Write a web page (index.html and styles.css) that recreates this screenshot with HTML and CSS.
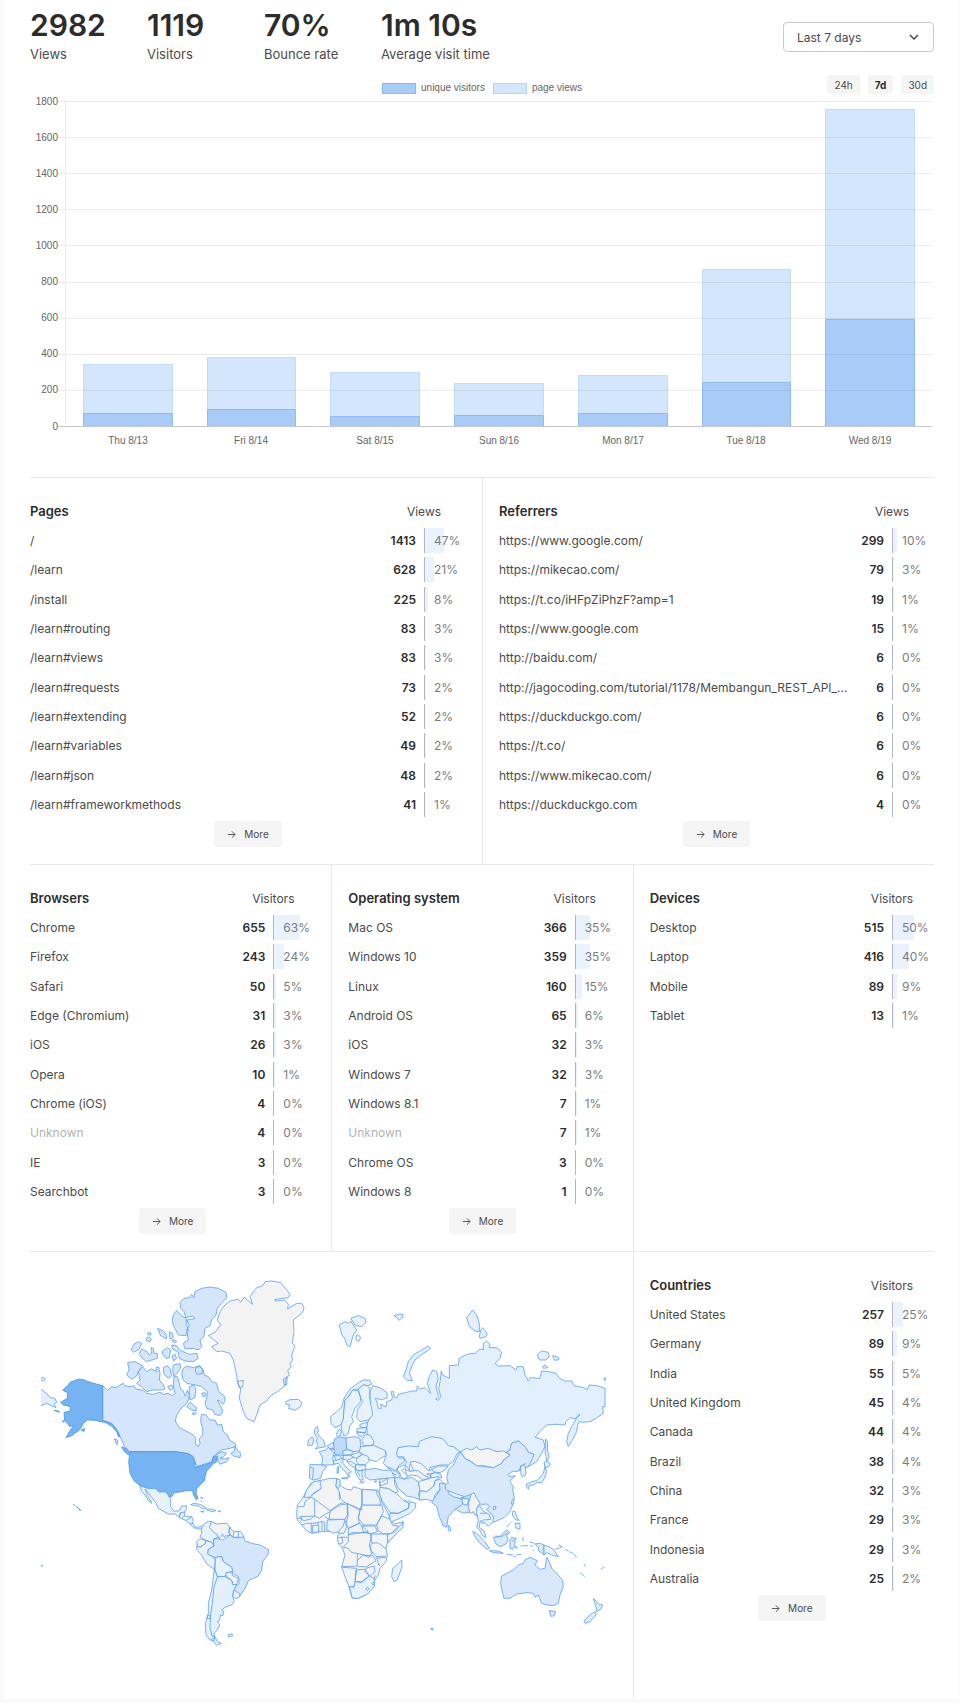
FILE: index.html
```html
<!DOCTYPE html>
<html lang="en">
<head>
    <meta charset="utf-8">
    <meta name="viewport" content="width=device-width, initial-scale=1">
    <title>Website stats</title>
    <link rel="stylesheet" href="styles.css">
</head>
<body>
    <svg class="sprite" aria-hidden="true">
        <symbol id="arrow" viewBox="0 0 10 10">
            <path d="M1 5h8M5.500 1.500L9 5 5.500 8.500"/>
        </symbol>
    </svg>
    <main class="page">
        <header class="header">
            <dl class="metrics">
                <div class="metric"><dt>Views</dt><dd>2982</dd></div>
                <div class="metric"><dt>Visitors</dt><dd>1119</dd></div>
                <div class="metric"><dt>Bounce rate</dt><dd>70%</dd></div>
                <div class="metric"><dt>Average visit time</dt><dd>1m 10s</dd></div>
            </dl>
            <div class="dropdown">
                <select aria-label="Date range">
                    <option>Last 7 days</option>
                    <option>Last 24 hours</option>
                    <option>Last 30 days</option>
                </select>
                <svg class="chevron" viewBox="0 0 10 6" aria-hidden="true"><path d="M1 1l4 4 4-4"/></svg>
            </div>
        </header>

        <section class="chart">
            <div class="toolbar">
                <ul class="legend">
                    <li><span class="swatch visitors"></span>unique visitors</li>
                    <li><span class="swatch views"></span>page views</li>
                </ul>
                <div class="ranges">
                    <button type="button">24h</button>
                    <button type="button" class="active">7d</button>
                    <button type="button">30d</button>
                </div>
            </div>
            <svg class="bars" viewBox="0 0 904 356" role="img" aria-label="Visitors and page views per day">
                <g class="grid">
                    <path d="M28 7.500H902M28 43.500H902M28 79.500H902M28 115.500H902M28 151.500H902M28 188.500H902M28 224.500H902M28 260.500H902M28 296.500H902M35.500 7.500V332"/>
                    <path class="zero" d="M28 332.500H902"/>
                </g>
                <g class="axis-y">
                    <text x="28" y="11">1800</text>
                    <text x="28" y="47">1600</text>
                    <text x="28" y="83">1400</text>
                    <text x="28" y="119">1200</text>
                    <text x="28" y="155">1000</text>
                    <text x="28" y="191">800</text>
                    <text x="28" y="227">600</text>
                    <text x="28" y="263">400</text>
                    <text x="28" y="299">200</text>
                    <text x="28" y="336">0</text>
                </g>
                <g class="bar-views">
                    <path d="M53.500 319V270.500H142.500V319"/>
                    <path d="M177.500 315V263.500H265.500V315"/>
                    <path d="M300.500 322V278.500H389.500V322"/>
                    <path d="M424.500 321V289.500H513.500V321"/>
                    <path d="M548.500 319V281.500H637.500V319"/>
                    <path d="M672.500 288V175.500H760.500V288"/>
                    <path d="M795.500 225V15.500H884.500V225"/>
                </g>
                <g class="bar-visitors">
                    <path d="M53.500 332V319.500H142.500V332"/>
                    <path d="M177.500 332V315.500H265.500V332"/>
                    <path d="M300.500 332V322.500H389.500V332"/>
                    <path d="M424.500 332V321.500H513.500V332"/>
                    <path d="M548.500 332V319.500H637.500V332"/>
                    <path d="M672.500 332V288.500H760.500V332"/>
                    <path d="M795.500 332V225.500H884.500V332"/>
                </g>
                <g class="axis-x">
                    <text x="98" y="350">Thu 8/13</text>
                    <text x="221" y="350">Fri 8/14</text>
                    <text x="345" y="350">Sat 8/15</text>
                    <text x="469" y="350">Sun 8/16</text>
                    <text x="593" y="350">Mon 8/17</text>
                    <text x="716" y="350">Tue 8/18</text>
                    <text x="840" y="350">Wed 8/19</text>
                </g>
            </svg>
        </section>

        <div class="row halves">
            <section class="panel">
                <table>
                    <thead><tr><th>Pages</th><th colspan="2">Views</th></tr></thead>
                    <tbody>
                        <tr><td>/</td><td>1413</td><td><div class="pct"><span style="width: 47%"></span>47%</div></td></tr>
                        <tr><td>/learn</td><td>628</td><td><div class="pct"><span style="width: 21%"></span>21%</div></td></tr>
                        <tr><td>/install</td><td>225</td><td><div class="pct"><span style="width: 8%"></span>8%</div></td></tr>
                        <tr><td>/learn#routing</td><td>83</td><td><div class="pct"><span style="width: 3%"></span>3%</div></td></tr>
                        <tr><td>/learn#views</td><td>83</td><td><div class="pct"><span style="width: 3%"></span>3%</div></td></tr>
                        <tr><td>/learn#requests</td><td>73</td><td><div class="pct"><span style="width: 2%"></span>2%</div></td></tr>
                        <tr><td>/learn#extending</td><td>52</td><td><div class="pct"><span style="width: 2%"></span>2%</div></td></tr>
                        <tr><td>/learn#variables</td><td>49</td><td><div class="pct"><span style="width: 2%"></span>2%</div></td></tr>
                        <tr><td>/learn#json</td><td>48</td><td><div class="pct"><span style="width: 2%"></span>2%</div></td></tr>
                        <tr><td>/learn#frameworkmethods</td><td>41</td><td><div class="pct"><span style="width: 1%"></span>1%</div></td></tr>
                    </tbody>
                </table>
                <button type="button" class="more"><svg><use href="#arrow"/></svg>More</button>
            </section>
            <section class="panel">
                <table>
                    <thead><tr><th>Referrers</th><th colspan="2">Views</th></tr></thead>
                    <tbody>
                        <tr><td>https://www.google.com/</td><td>299</td><td><div class="pct"><span style="width: 10%"></span>10%</div></td></tr>
                        <tr><td>https://mikecao.com/</td><td>79</td><td><div class="pct"><span style="width: 3%"></span>3%</div></td></tr>
                        <tr><td>https://t.co/iHFpZiPhzF?amp=1</td><td>19</td><td><div class="pct"><span style="width: 1%"></span>1%</div></td></tr>
                        <tr><td>https://www.google.com</td><td>15</td><td><div class="pct"><span style="width: 1%"></span>1%</div></td></tr>
                        <tr><td>http://baidu.com/</td><td>6</td><td><div class="pct">0%</div></td></tr>
                        <tr><td>http://jagocoding.com/tutorial/1178/Membangun_REST_API_...</td><td>6</td><td><div class="pct">0%</div></td></tr>
                        <tr><td>https://duckduckgo.com/</td><td>6</td><td><div class="pct">0%</div></td></tr>
                        <tr><td>https://t.co/</td><td>6</td><td><div class="pct">0%</div></td></tr>
                        <tr><td>https://www.mikecao.com/</td><td>6</td><td><div class="pct">0%</div></td></tr>
                        <tr><td>https://duckduckgo.com</td><td>4</td><td><div class="pct">0%</div></td></tr>
                    </tbody>
                </table>
                <button type="button" class="more"><svg><use href="#arrow"/></svg>More</button>
            </section>
        </div>

        <div class="row thirds">
            <section class="panel">
                <table>
                    <thead><tr><th>Browsers</th><th colspan="2">Visitors</th></tr></thead>
                    <tbody>
                        <tr><td>Chrome</td><td>655</td><td><div class="pct"><span style="width: 63%"></span>63%</div></td></tr>
                        <tr><td>Firefox</td><td>243</td><td><div class="pct"><span style="width: 24%"></span>24%</div></td></tr>
                        <tr><td>Safari</td><td>50</td><td><div class="pct"><span style="width: 5%"></span>5%</div></td></tr>
                        <tr><td>Edge (Chromium)</td><td>31</td><td><div class="pct"><span style="width: 3%"></span>3%</div></td></tr>
                        <tr><td>iOS</td><td>26</td><td><div class="pct"><span style="width: 3%"></span>3%</div></td></tr>
                        <tr><td>Opera</td><td>10</td><td><div class="pct"><span style="width: 1%"></span>1%</div></td></tr>
                        <tr><td>Chrome (iOS)</td><td>4</td><td><div class="pct">0%</div></td></tr>
                        <tr><td class="unknown">Unknown</td><td>4</td><td><div class="pct">0%</div></td></tr>
                        <tr><td>IE</td><td>3</td><td><div class="pct">0%</div></td></tr>
                        <tr><td>Searchbot</td><td>3</td><td><div class="pct">0%</div></td></tr>
                    </tbody>
                </table>
                <button type="button" class="more"><svg><use href="#arrow"/></svg>More</button>
            </section>
            <section class="panel">
                <table>
                    <thead><tr><th>Operating system</th><th colspan="2">Visitors</th></tr></thead>
                    <tbody>
                        <tr><td>Mac OS</td><td>366</td><td><div class="pct"><span style="width: 35%"></span>35%</div></td></tr>
                        <tr><td>Windows 10</td><td>359</td><td><div class="pct"><span style="width: 35%"></span>35%</div></td></tr>
                        <tr><td>Linux</td><td>160</td><td><div class="pct"><span style="width: 15%"></span>15%</div></td></tr>
                        <tr><td>Android OS</td><td>65</td><td><div class="pct"><span style="width: 6%"></span>6%</div></td></tr>
                        <tr><td>iOS</td><td>32</td><td><div class="pct"><span style="width: 3%"></span>3%</div></td></tr>
                        <tr><td>Windows 7</td><td>32</td><td><div class="pct"><span style="width: 3%"></span>3%</div></td></tr>
                        <tr><td>Windows 8.1</td><td>7</td><td><div class="pct"><span style="width: 1%"></span>1%</div></td></tr>
                        <tr><td class="unknown">Unknown</td><td>7</td><td><div class="pct"><span style="width: 1%"></span>1%</div></td></tr>
                        <tr><td>Chrome OS</td><td>3</td><td><div class="pct">0%</div></td></tr>
                        <tr><td>Windows 8</td><td>1</td><td><div class="pct">0%</div></td></tr>
                    </tbody>
                </table>
                <button type="button" class="more"><svg><use href="#arrow"/></svg>More</button>
            </section>
            <section class="panel">
                <table>
                    <thead><tr><th>Devices</th><th colspan="2">Visitors</th></tr></thead>
                    <tbody>
                        <tr><td>Desktop</td><td>515</td><td><div class="pct"><span style="width: 50%"></span>50%</div></td></tr>
                        <tr><td>Laptop</td><td>416</td><td><div class="pct"><span style="width: 40%"></span>40%</div></td></tr>
                        <tr><td>Mobile</td><td>89</td><td><div class="pct"><span style="width: 9%"></span>9%</div></td></tr>
                        <tr><td>Tablet</td><td>13</td><td><div class="pct"><span style="width: 1%"></span>1%</div></td></tr>
                    </tbody>
                </table>
            </section>
        </div>

        <div class="row world">
            <section class="map">
                <svg viewBox="0 -39 1760 1341" role="img" aria-label="Visitors by country">
                    <!-- Canada, Alaska, Greenland, Iceland -->
                    <g>
                        <path class="ca" d="M218 362L232 376 245 365 258 368 270 360 280 355 283 362 300 365 312 362 318 372 340 376 350 385 370 388 390 382 400 388 415 385 428 392 435 385 430 360 432 335 442 335 448 355 452 372 460 378 466 394 472 376 478 390 475 405 470 415 455 428 440 450 436 468 448 488 468 498 490 510 498 520 496 535 504 545 510 535 508 522 518 510 518 490 512 470 514 448 528 450 540 465 555 465 562 480 575 478 580 500 592 510 598 525 615 535 618 545 600 550 575 555 560 565 548 578 545 590 500 605 495 590 490 575 475 566 435 560 300 560 285 548 275 525 262 500 245 478 218 466Z"/>
                        <path class="ca" d="M450 112L462 100 480 98 485 88 492 98 495 80 515 70 540 66 565 70 588 82 590 98 575 115 562 130 558 150 545 165 540 182 525 190 522 215 510 225 515 245 505 255 490 250 465 252 460 235 475 225 470 195 478 180 470 165 494 161 488 153 468 158 462 140 452 130ZM430 150L440 136 455 152 468 160 470 180 475 195 468 212 445 210 430 182 427 165Z"/>
                        <path class="ca" d="M425 240L440 242 448 255 460 260 478 268 500 265 505 280 490 290 465 288 448 280 445 262 428 252ZM383 190L400 198 410 212 408 222 392 212ZM418 200L428 205 430 218 420 222ZM352 204l8-2 4 6-8 3ZM348 220l8-4 8 6-4 8-10-3ZM303 255L312 238 325 230 335 235 328 252 312 262ZM328 265L335 252 352 260 358 270 365 265 363 248 370 250 372 265 382 265 382 280 365 285 350 290 335 278ZM397 258L412 248 422 255 418 278 408 280 398 268ZM427 272L435 268 440 280 430 288ZM425 226l10-2 5 6-8 3ZM293 292L315 290 338 302 325 320 318 335 305 342 290 330 297 315ZM325 320L338 305 350 320 365 312 380 320 378 308 386 306 390 325 388 345 400 360 405 372 395 375 370 375 350 380 335 365 320 355 330 345ZM400 308L412 302 420 310 425 332 415 340 402 328ZM430 300L450 296 452 310 440 325 432 335 428 318ZM413 365L425 360 430 370 420 376Z"/>
                        <path class="ca" d="M460 310L470 303 490 308 510 302 520 315 522 330 535 335 545 350 560 355 565 378 585 395 585 410 578 418 572 410 562 405 575 430 578 440 570 452 555 448 548 435 530 430 525 415 530 400 532 380 515 365 495 360 470 355 460 345 455 325ZM498 308l12-4 8 10-2 12-14 2-6-10ZM478 366L490 360 498 372 495 398 480 405 478 390ZM515 385l10-2 3 8-8 5ZM470 425L480 412 490 420 500 428 498 438 485 435ZM486 446l8-4 4 4-6 4ZM253 522l10 3-2 14ZM560 568L575 560 590 565 580 575 570 580 585 582 598 578 590 590 570 598 563 585ZM602 565L612 560 615 545 622 555 632 565 630 578 612 574Z"/>
                        <path class="us" d="M218 362L180 352 160 344 147 342 120 352 113 362 98 375 105 380 113 382 112 400 92 412 100 420 122 425 120 438 102 442 104 468 112 474 118 484 130 483 118 500 108 518 125 512 145 498 155 486 160 475 172 465 195 466 210 470 225 472 245 484 260 500 266 516 270 514 262 496 245 475 218 466ZM153 494l12-3-4 9ZM72 436l14 2 2 4ZM96 468l6 0 0 4Z"/>
                        <path class="us" d="M300 560L435 560 475 566 488 575 495 590 495 608 515 602 530 598 545 592 552 572 562 575 560 590 548 598 540 608 530 618 525 635 524 647 510 660 500 670 498 683 504 700 500 705 490 690 488 677 470 677 450 681 432 683 425 695 418 697 410 683 400 680 388 682 375 670 355 671 330 662 312 647 300 625 296 590Z"/>
                        <path class="us" d="M275 545L290 552 300 565 295 570 282 558ZM130 719l4 2ZM138 724l6 4ZM146 730l6 6-3 0Z"/>
                        <path class="ru" d="M33 373L50 385 60 398 75 400 80 412 72 418 78 428 60 420 50 415 33 422M33 340l8-3 5 6-5 5-8-3"/>
                        <path class="none" d="M570 140L585 120 600 108 625 103 632 112 642 96 655 108 668 118 660 95 680 68 698 62 705 50 725 48 752 53 770 75 780 88 775 98 735 103 735 108 765 105 775 118 773 132 800 115 815 115 822 128 818 142 790 165 792 200 787 235 795 242 785 270 788 285 780 295 783 305 773 318 778 330 765 345 768 360 742 380 722 392 710 408 690 420 682 445 672 470 650 460 640 440 628 400 632 372 622 350 620 330 610 285 600 265 575 258 560 260 545 245 565 235 535 212 555 202 572 180 562 165ZM760 342L772 335 770 358 762 360ZM622 350L640 346 638 365 628 368Z"/>
                        <path class="low" d="M767 410L780 404 805 403 815 412 812 425 795 436 775 430 780 420 768 418Z"/>
                    </g>
                    <!-- Central and South America -->
                    <g transform="translate(0 525)">
                        <path class="low" d="M330 137L355 146 375 145 388 157 400 155 410 158 418 172 422 178 422 200 432 214 448 212 455 198 470 198 468 210 462 218 450 220 448 232 435 222 415 222 385 205 378 190 365 172 350 152 345 147 352 165 366 190 355 182 345 165 335 155Z"/>
                        <path class="low" d="M448 232L452 218 465 216 463 228 485 230 490 240 488 250 495 260 505 262 515 258 520 262 515 268 500 266 490 262 478 250 468 242ZM463 228l-8 8M470 240l15-9M480 250h9"/>
                        <path class="low" d="M482 194L492 190 510 193 530 205 520 207 505 198 490 196ZM512 214l10 1-4 2ZM530 210L540 206 558 212 545 215ZM564 213l8 1-6 2ZM510 172l8 2-2 4M512 182l4 4M33 376l4 0 0 4Z"/>
                        <path class="low" d="M515 264L522 252 535 244 545 245 540 262 550 275 562 285 565 292 552 296 550 318 545 307 530 302 518 296 510 290 515 280Z"/>
                        <path class="none" d="M545 245L560 252 590 250 600 262 595 275 600 285 580 290 578 282 568 297 562 285 550 275 538 262ZM598 262L612 275 632 275 642 290 640 298 628 292 612 292 600 285ZM612 275l-3 16M625 275v16M510 296L528 302 525 312 510 322 502 318 500 305Z"/>
                        <path class="low" d="M528 302L545 307 552 318 535 328 533 342 548 350 556 360 553 388 530 372 515 345 500 328 500 318 510 322 525 312Z"/>
                        <path class="br" d="M552 318L550 298 565 296 578 300 600 285 612 293 630 293 640 290 645 303 665 310 690 315 715 328 715 342 698 365 695 390 685 408 655 422 648 440 630 468 612 450 620 436 628 430 625 410 608 400 605 382 580 365 575 350 556 352 548 350 533 342 535 328Z"/>
                        <path class="low" d="M556 352L575 350 580 365 605 382 608 395 590 398 585 410 562 410 555 388 556 370Z"/>
                        <path class="none" d="M588 398L605 396 608 408 625 415 620 434 608 434 605 420 588 408Z"/>
                        <path class="ar" d="M562 410L585 410 605 422 608 434 620 434 612 450 608 465 612 485 605 495 585 502 575 510 582 515 578 528 572 524 568 542 562 545 570 555 560 572 552 580 555 590 545 588 538 565 540 530 545 490 550 440Z"/>
                        <path class="low" d="M612 450L630 462 628 472 618 476 608 470ZM553 388L558 400 562 412 552 440 547 490 541 530 540 565 546 588 555 592 552 602 540 600 528 585 526 550 535 520 535 490 545 450 550 410ZM532 526h9v10h-9ZM545 598L556 592 562 605 574 610 560 616ZM594 584L606 582 608 588 596 590Z"/>
                    </g>
                    <!-- Europe, Russia, China -->
                    <g transform="translate(750 0)">
                        <path class="ru" d="M278 362L300 368 320 382 322 398 305 404 286 400 292 415 295 430 304 430 302 418 318 425 320 410 335 405 337 396 333 380 341 380 342 395 350 399 355 388 380 382 395 378 410 378 412 362 420 372 435 368 452 385 442 355 448 335 458 315 470 320 475 340 468 365 476 395 467 403 475 406 482 395 476 370 480 350 484 318 488 330 508 340 508 302 535 300 538 280 560 268 585 265 600 252 610 255 610 235 620 228 630 238 628 248 650 248 665 262 660 280 645 295 655 303 690 302 708 315 712 305 730 305 735 330 745 348 750 338 780 340 785 318 805 320 828 325 838 340 855 348 875 348 882 362 912 368 922 374 928 360 950 362 975 370 975 425 968 425 970 445 945 462 930 470 910 472 898 470 893 480 890 500 880 520 865 545 860 530 865 505 875 485 890 460 900 450 898 447 885 462 870 458 858 470 855 480 830 478 800 480 780 500 765 517 790 525 795 545 785 565 770 590 745 605 742 590 762 568 745 562 735 545 715 528 695 535 690 555 670 570 650 560 540 562 520 545 418 545 355 548 350 565 358 580 370 578 375 590 358 600 345 622 320 605 310 595 318 572 318 560 285 545 270 540 280 530 262 508 260 480 272 450 270 380Z"/>
                        <path class="ru" d="M370 335L378 315 385 290 400 270 425 255 445 243 452 250 445 256 425 268 405 285 395 305 388 325 398 348 380 345ZM560 158L578 135 590 150 598 175 598 200 585 198 568 185ZM598 215L602 195 608 188 622 205 618 215 600 220ZM772 268L785 258 805 262 808 275 798 285 778 285ZM818 272l15 4 4 8-14 2ZM788 305l8-5 8 8-14 2ZM970 343l6-6 0 10ZM342 152l15-4 12 0 0 8-12 10-6-8ZM795 560L797 522 803 530 802 555 808 575 800 590 798 575Z"/>
                        <path class="low" d="M178 180L195 170 205 175 212 168 220 180 230 195 220 210 210 245 200 240 195 222 185 208ZM212 160L235 152 255 160 258 172 245 185 225 180ZM228 212l6-4 8 10-6 12-8-6Z"/>
                        <path class="low" d="M152 455L170 440 185 425 192 400 210 372 238 352 250 345 270 346 275 358 262 362 250 360 235 372 218 375 205 395 195 405 192 435 190 462 183 480 165 488 153 475Z"/>
                        <path class="low" d="M190 462L192 435 195 405 208 392 218 375 235 378 242 395 242 410 225 430 215 455 220 470 210 482 205 505 192 514 185 495 183 480ZM235 372L250 360 262 362 270 372 268 395 275 430 278 450 265 465 240 470 230 458 232 435 248 410 240 395Z"/>
                        <path class="low" d="M240 478L262 472 260 488 240 486ZM232 490L260 488 256 503 230 500ZM230 502L256 503 246 515 236 512ZM245 525L258 508 272 512 282 530 278 542 250 542ZM240 545L280 540 296 548 315 556 318 572 300 580 290 590 270 585 260 575 250 570 238 560Z"/>
                        <path class="mid" d="M198 518L225 515 240 520 242 545 238 558 220 560 200 552 195 535ZM170 505L178 492 184 500 180 516 172 518ZM105 490L112 484 115 495 112 505 122 518 130 525 137 545 120 548 105 552 115 540 108 532 112 520 103 505ZM85 525L97 515 102 525 97 540 83 542ZM118 560L135 556 146 546 162 565 158 580 162 598 150 600 125 600 128 580ZM90 598L130 600 140 605 128 620 122 640 100 645 88 640ZM90 606l10 4-2 32M160 588L178 580 192 582 186 592 198 606 214 620 206 624 208 638 198 622 185 610 175 595 162 598Z"/>
                        <path class="de" d="M163 522L178 515 198 520 200 552 188 560 192 572 165 568 160 545Z"/>
                        <path class="mid" d="M142 542L160 532 162 548 150 552ZM150 552l14 2M162 572l16 0 10 8-20 6Z"/>
                        <path class="low" d="M188 560l12-6 22 6-10 10-22 0ZM190 572l22-2 8 8-18 8-12-4ZM212 570l24-8 10 6-16 12-12-4ZM230 580l18-12 16 6 4 14-12 12-20-2-8-10ZM200 588l14 2 14 8-2 12-18-12ZM228 598l12 2 16 0 2 12-22 6-10-8ZM224 612l12 6 12-2-2 12 4 14-10 4-12-20ZM232 620l8 14M238 654l14 0"/>
                        <path class="low" d="M172 605l4 0-1 20-4 0ZM184 640l18-4 0 6Z"/>
                        <path class="mid" d="M255 615L285 610 310 616 340 615 350 630 342 640 300 642 270 645 255 635Z"/>
                        <path class="low" d="M322 605L345 616 360 632 352 642 340 630 334 616ZM340 618l12-2 8 12M336 624l14 6"/>
                        <path class="kz" d="M355 548L385 543 415 545 418 530 435 522 455 515 475 518 490 522 505 542 520 545 540 560 530 568 520 590 505 600 480 600 450 608 445 625 425 605 400 596 388 600 390 618 375 600 380 590 370 575 352 576 350 562Z"/>
                        <path class="cn" d="M540 560L555 580 575 592 590 602 610 604 640 608 665 595 670 585 690 570 680 560 690 555 695 535 715 528 735 545 745 562 762 568 758 580 745 605 725 612 712 620 700 618 684 628 690 636 706 632 692 645 690 650 700 665 698 675 703 695 700 715 690 740 672 758 650 768 640 772 625 770 605 775 598 762 585 745 575 740 550 745 530 735 505 730 495 705 478 695 470 680 480 665 505 655 500 640 505 615 520 600Z"/>
                        <path class="none" d="M542 560L560 550 575 555 590 545 600 555 625 550 650 560 670 558 690 570 670 585 665 595 640 608 610 602 590 602 575 590 555 580Z"/>
                    </g>
                    <!-- Africa, Middle East, South Asia, Oceania -->
                    <g transform="translate(750 525)">
                        <path class="none" d="M95 128L120 122 150 115 172 115 180 125 178 135 200 148 215 150 220 140 245 148 275 150 292 150 300 165 305 185 322 215 335 245 345 252 370 245 368 262 345 285 322 310 318 325 322 345 318 365 300 385 295 405 285 420 280 440 262 462 235 475 217 474 205 435 195 410 185 380 195 345 185 320 175 312 172 290 178 278 165 272 140 275 120 275 95 280 80 272 65 255 52 240 50 225 52 195 68 175 80 150Z"/>
                        <path class="line" d="M124 145L90 170 104 178 150 212 178 192 195 188 182 175 178 155 168 140 170 118M104 178V228L60 230M52 200H72L75 185 92 172M104 228L118 235 132 225 150 215M178 155V180M195 188L245 210V148M150 215L180 195 202 192 202 225 195 238 148 238ZM148 238l-14-8M202 190L240 210 235 235 238 250 205 265 198 250 205 225ZM205 265L238 250 265 275 230 280 205 285ZM195 240l5 20-8 20-16 0M60 230l10 12 20-4 14-10M65 255l15-5 14 0 0 28M94 250l20-2 0 28M114 248l12-4 8 4 0 26M126 246v28M52 235l14 0-4 10"/>
                        <path class="line" d="M245 195L305 195 310 215 300 235 290 255 250 255 235 235 240 210ZM245 258L285 258 292 275 270 282 250 275ZM290 255L305 228 330 238 338 256 355 258 335 280 310 282 295 272ZM270 282h53v28M272 285l4 24 20 0 22 18M205 285L215 278 265 278 275 285 268 315 275 340 268 352 250 345 232 340 215 338 205 325 190 322 205 305ZM172 292l30 0M185 290l4 18-12 4M276 310l-6 10 5 15 15 15 28-2M232 340v38l-47 2M232 362L250 345 280 348 288 362 260 380 235 380M258 385L282 378 285 395 270 410 255 395ZM228 390L255 388 268 408 245 425 225 425ZM188 382L230 385 225 430 222 440 208 440M290 350l4 18 6 10-6-6M282 438l-4-10 8-22M318 352l-26 2"/>
                        <path class="low" d="M100 125L120 122 124 145 100 160 90 172 72 172 80 150ZM170 118l10 0 0 16-6 12-6-8ZM247 148L275 150 292 152 290 160 300 180 302 195 247 195ZM142 240L195 238 190 258 175 275 162 280 140 270ZM208 440L222 442 225 425 245 428 268 408 282 415 284 438 262 462 235 475 217 474ZM98 256l18 0 0 20-18 2ZM322 285L345 275 368 247 369 262 345 285 324 308ZM338 385L350 375 365 360 366 380 352 420 342 425 335 410Z"/>
                        <path class="line" d="M257 447l5-6 5 5-5 6ZM275 430l5-3 4 4-5 4Z"/>
                        <path class="low" d="M300 142L325 145 345 158 360 170 370 182 388 190 385 205 355 220 330 218 322 205 305 180 298 158ZM330 240L330 220 355 220 385 205 388 185 408 190 405 205 390 220 360 235 335 245Z"/>
                        <path class="none" d="M300 128L325 115 342 112 345 135 355 155 345 158 325 145 300 142ZM298 118l26-4-2 16-22 8ZM352 140l28 28"/>
                        <path class="line" d="M282 124l8-2-2 5ZM240 124h14M372 178l8 6 8-4"/>
                        <path class="mid" d="M343 115L355 112 372 118 395 112 415 125 420 150 415 165 425 180 400 172 380 168 360 150 352 140Z"/>
                        <path class="none" d="M374 114L380 104 375 88 395 96 400 90 390 66 405 64 425 72 445 92 460 88 462 100 440 102 455 112 430 120 412 108 395 105ZM415 125L440 118 455 112 470 108 476 116 465 122 460 140 440 155 420 152Z"/>
                        <path class="line" d="M395 92L415 92 432 106 445 112"/>
                        <path class="low" d="M420 152L440 155 462 138 465 122 480 118 492 130 478 150 465 165 460 185 440 178 418 180ZM455 88L475 78 505 78 495 90 480 98 462 96ZM450 104l16-6 16 4 4 12-14-4-16 4Z"/>
                        <path class="sea" d="M353 84L372 74 376 82 364 92 374 100 382 106 380 114 370 116 362 110 360 98 352 92Z"/>
                        <path class="in" d="M478 130L495 130 497 148 512 160 540 170 550 172 575 162 580 168 565 190 550 185 545 195 525 208 505 230 500 262 490 258 478 230 470 200 455 188 470 165 480 150Z"/>
                        <path class="low" d="M505 152L530 162 550 168 548 178 520 170 505 160ZM543 172l12 4 10 0 0 10-4 10-12-4ZM505 255l8 8-2 10-6-2Z"/>
                        <path class="none" d="M566 188L574 162 582 158 590 175 600 190 590 205 592 225 585 225 580 215 570 220 565 200Z"/>
                        <path class="low" d="M590 205L605 193 622 192 630 200 620 208 640 228 640 245 625 258 612 248 605 240 600 245 598 262 612 272 618 292 608 288 598 268 590 262 595 240 590 222ZM600 200l10 14 18 10 4 14-22 2M600 220l18 0M640 200l8 0-2 8-6 2Z"/>
                        <path class="low" d="M698 178l5 3-6 14-3-6ZM718 430ZM722 78L734 74 738 96 736 106 726 110 722 98Z"/>
                        <path class="line" d="M716 92l8-14 14-8"/>
                        <path class="mid" d="M740 132L755 125 770 122 778 115 790 100 795 80 800 95 795 112 785 128 770 128 762 135 748 136 746 148 740 142ZM792 68L800 64 812 72 806 80 796 84Z"/>
                        <path class="id" d="M578 275L590 280 615 305 628 325 620 328 600 310 585 290ZM628 332L655 333 670 340 640 338ZM640 292L658 290 680 270 690 278 680 285 684 300 678 312 660 320 648 312ZM690 300L695 292 710 296 698 302 708 306 702 312 712 325 702 320 698 328 690 325ZM765 312L780 310 792 315 792 345 775 332 775 322Z"/>
                        <path class="low" d="M697 215l8-2 5 18 8 10-12-2-8-12ZM705 250l15 0 0 18-12-4ZM792 315L810 322 820 328 835 350 815 345 800 338 792 345Z"/>
                        <path class="line" d="M645 288l20 2 18-12M680 262l12-14M680 343l20 2M708 345l16-2M700 350l8 0M728 292l2 12M722 318l22-1M748 306l16 4M750 318l10 0M758 330l4 2M825 328l14-4 6-4M836 314l12 8M855 328l10 5M868 335l12 6M882 342l8 10M900 398l14 12M962 388l12-8M912 372l4 8M452 565l8 0-3 6Z"/>
                        <path class="au" d="M665 408L680 400 700 390 715 375 730 370 735 360 750 352 772 362 765 375 780 388 795 385 800 352 808 365 815 385 830 400 848 420 850 440 840 465 835 490 820 497 800 495 785 490 775 465 765 472 760 460 740 458 710 462 690 475 672 475 668 460 662 430ZM808 512l18 2-2 12-10 4Z"/>
                        <path class="mid" d="M940 475L950 485 956 492 968 495 962 508 950 515 948 500ZM945 515L948 525 930 545 915 550 912 542 930 525Z"/>
                    </g>
                </svg>
            </section>
            <section class="panel">
                <table>
                    <thead><tr><th>Countries</th><th colspan="2">Visitors</th></tr></thead>
                    <tbody>
                        <tr><td>United States</td><td>257</td><td><div class="pct"><span style="width: 25%"></span>25%</div></td></tr>
                        <tr><td>Germany</td><td>89</td><td><div class="pct"><span style="width: 9%"></span>9%</div></td></tr>
                        <tr><td>India</td><td>55</td><td><div class="pct"><span style="width: 5%"></span>5%</div></td></tr>
                        <tr><td>United Kingdom</td><td>45</td><td><div class="pct"><span style="width: 4%"></span>4%</div></td></tr>
                        <tr><td>Canada</td><td>44</td><td><div class="pct"><span style="width: 4%"></span>4%</div></td></tr>
                        <tr><td>Brazil</td><td>38</td><td><div class="pct"><span style="width: 4%"></span>4%</div></td></tr>
                        <tr><td>China</td><td>32</td><td><div class="pct"><span style="width: 3%"></span>3%</div></td></tr>
                        <tr><td>France</td><td>29</td><td><div class="pct"><span style="width: 3%"></span>3%</div></td></tr>
                        <tr><td>Indonesia</td><td>29</td><td><div class="pct"><span style="width: 3%"></span>3%</div></td></tr>
                        <tr><td>Australia</td><td>25</td><td><div class="pct"><span style="width: 2%"></span>2%</div></td></tr>
                    </tbody>
                </table>
                <button type="button" class="more"><svg><use href="#arrow"/></svg>More</button>
            </section>
        </div>
    </main>
</body>
</html>
```
FILE: styles.css
```css
* {
    box-sizing: border-box;
}
body {
    margin: 0;
    padding: 0 1px 3px 4px;
    background-color: #fafafa;
    font-family: Inter, "Liberation Sans", sans-serif;
    font-size: 12px;
    color: #4b4b4b;
}
button,
select {
    font-family: inherit;
    color: inherit;
    cursor: pointer;
}
.sprite {
    display: none;
}
.page {
    padding: 0 25px 0 26px;
    background-color: #fff;
}

/* header */
.header {
    display: flex;
    justify-content: space-between;
    padding-top: 10px;
}
.metrics {
    display: flex;
    margin: 0;
}
.metric {
    display: flex;
    flex-direction: column-reverse;
    justify-content: flex-end;
    min-width: 117px;
}
.metric dt {
    font-size: 13px;
    line-height: 20px;
    white-space: nowrap;
}
.metric dd {
    margin: 0;
    font-size: 30px;
    font-weight: 600;
    line-height: 30px;
    padding-bottom: 4px;
    color: #2c2c2c;
}
.dropdown {
    position: relative;
    width: 151px;
    margin-top: 12px;
}
.dropdown select {
    appearance: none;
    width: 100%;
    height: 30px;
    padding: 0 13px;
    border: 1px solid #cacaca;
    border-radius: 4px;
    background-color: #fff;
    font-size: 12px;
}
.chevron {
    position: absolute;
    top: 12px;
    right: 15px;
    width: 10px;
    height: 6px;
    fill: none;
    stroke: #4b4b4b;
    stroke-width: 1.5;
    pointer-events: none;
}

/* chart */
.toolbar {
    display: grid;
    grid-template-columns: 1fr auto 1fr;
    align-items: end;
    margin-top: 11px;
}
.legend {
    grid-column: 2;
    display: flex;
    gap: 8px;
    margin: 0;
    padding: 0;
    list-style: none;
    font: 10px/12px "Liberation Sans", sans-serif;
    color: #666;
}
.legend li {
    display: flex;
    align-items: center;
    gap: 5px;
}
.swatch {
    width: 34px;
    height: 11px;
    border: 1px solid #b5d4f9;
    background-color: #d4e6fb;
}
.swatch.visitors {
    border-color: #86b9f5;
    background-color: #a8ccf7;
}
.ranges {
    display: flex;
    justify-content: flex-end;
    gap: 8px;
}
.ranges button {
    height: 19px;
    padding: 0 7px;
    border: 0;
    border-radius: 3px;
    background-color: #f5f5f5;
    font-size: 10px;
}
.ranges .active {
    font-weight: 700;
    color: #2c2c2c;
}
.bars {
    display: block;
    width: 100%;
    height: auto;
}
.bars text {
    font: 10px "Liberation Sans", sans-serif;
    fill: #666;
}
.grid path {
    fill: none;
    stroke: #ebebeb;
}
.grid .zero {
    stroke: #c8c8c8;
}
.axis-y text {
    text-anchor: end;
}
.axis-x text {
    text-anchor: middle;
}
.bar-views path {
    fill: rgba(38, 128, 235, 0.2);
    stroke: rgba(38, 128, 235, 0.2);
}
.bar-visitors path {
    fill: rgba(38, 128, 235, 0.4);
    stroke: rgba(38, 128, 235, 0.4);
}

/* tables */
.row {
    display: grid;
    border-top: 1px solid #e8e8e8;
}
.chart + .row {
    margin-top: 27px;
}
.halves {
    grid-template-columns: repeat(2, minmax(0, 1fr));
}
.thirds {
    grid-template-columns: repeat(3, minmax(0, 1fr));
}
.world {
    grid-template-columns: minmax(0, 2fr) minmax(0, 1fr);
}
.panel {
    display: flex;
    flex-direction: column;
    align-items: center;
    padding: 18px 16px 17px;
    border-left: 1px solid #e8e8e8;
}
.panel:first-child {
    padding-left: 0;
    border-left: 0;
}
.panel:last-child {
    padding-right: 0;
}
.panel table {
    width: 100%;
    table-layout: fixed;
    border-collapse: collapse;
}
.panel th {
    height: 30px;
    padding: 0;
    font-weight: 400;
}
.panel th:first-child {
    font-size: 13px;
    font-weight: 600;
    text-align: left;
    color: #2c2c2c;
}
.panel th:last-child {
    width: 84px;
}
.panel td {
    height: 29px;
    padding: 0;
    overflow: hidden;
    white-space: nowrap;
    text-overflow: ellipsis;
}
.panel tr:nth-child(3n) td {
    height: 30px;
}
.panel td:nth-child(2) {
    padding-right: 8px;
    font-weight: 600;
    text-align: right;
    color: #2c2c2c;
}
.panel .unknown {
    color: #b3b3b3;
}
.pct {
    position: relative;
    height: 25px;
    padding-left: 9px;
    border-left: 1px solid #b3b8bf;
    line-height: 25px;
    color: #7c7c7c;
}
.pct span {
    position: absolute;
    top: 0;
    left: 0;
    height: 100%;
    background-color: rgba(38, 128, 235, 0.1);
}
.more {
    display: flex;
    align-items: center;
    gap: 8px;
    height: 26px;
    margin-top: 2px;
    padding: 0 13px;
    border: 0;
    border-radius: 3px;
    background-color: #f5f5f5;
    font-size: 10px;
}
.more svg {
    width: 9px;
    height: 9px;
    fill: none;
    stroke: #4b4b4b;
}

/* map */
.map {
    padding-right: 16px;
}
.map svg {
    display: block;
    width: 100%;
    height: auto;
}
.map path {
    fill: #e8f2fc;
    stroke: #5ea2f6;
    stroke-width: 2.500;
    stroke-linejoin: round;
}
.map .none {
    fill: #f3f3f3;
}
.map .line {
    fill: none;
}
.map .sea {
    fill: #fff;
}
.map .ru,
.map .ar {
    fill: #e2effc;
}
.map .mid {
    fill: #dfedfc;
}
.map .cn,
.map .au,
.map .id {
    fill: #d9e9fb;
}
.map .ca,
.map .br {
    fill: #d5e6fa;
}
.map .in {
    fill: #cfe3fb;
}
.map .de {
    fill: #c0dafa;
}
.map .us {
    fill: #75b3f3;
    stroke: #4a97ee;
}
```
